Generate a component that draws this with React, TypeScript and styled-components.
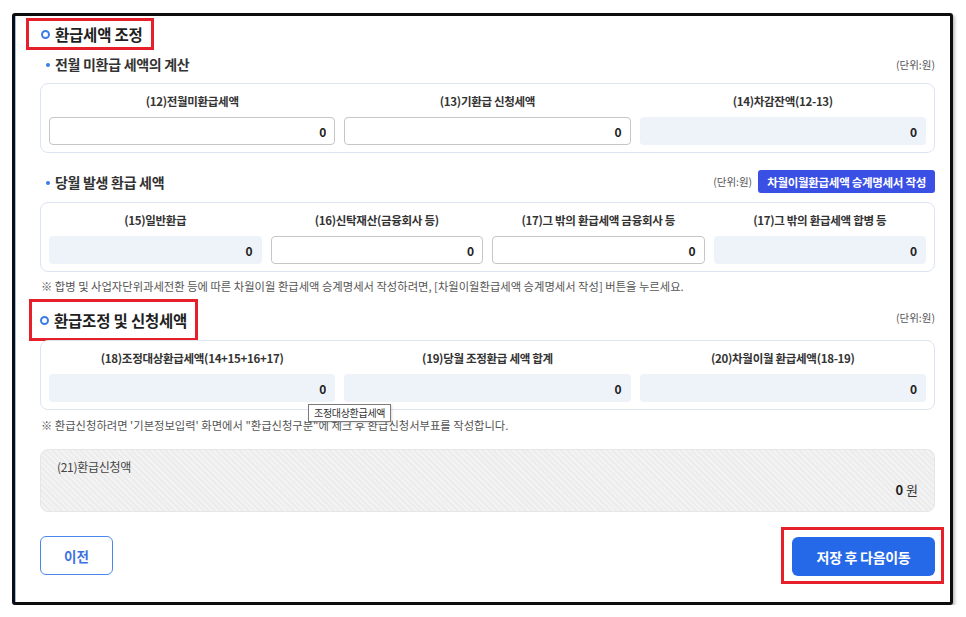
import styled, { createGlobalStyle } from 'styled-components'

type Field = { label: string; value: string; editable?: boolean }

const prevMonthFields: Field[] = [
  { label: '(12)전월미환급세액', value: '0', editable: true },
  { label: '(13)기환급 신청세액', value: '0', editable: true },
  { label: '(14)차감잔액(12-13)', value: '0' },
]

const currentMonthFields: Field[] = [
  { label: '(15)일반환급', value: '0' },
  { label: '(16)신탁재산(금융회사 등)', value: '0', editable: true },
  { label: '(17)그 밖의 환급세액 금융회사 등', value: '0', editable: true },
  { label: '(17)그 밖의 환급세액 합병 등', value: '0' },
]

const adjustFields: Field[] = [
  { label: '(18)조정대상환급세액(14+15+16+17)', value: '0' },
  { label: '(19)당월 조정환급 세액 합계', value: '0' },
  { label: '(20)차월이월 환급세액(18-19)', value: '0' },
]

function FieldGrid({ fields, top, children }: { fields: Field[]; top: number; children?: React.ReactNode }) {
  return (
    <Card $cols={fields.length} $top={top}>
      {fields.map(f => (
        <Cell key={f.label}>
          <Label>{f.label}</Label>
          {f.editable ? (
            <Amount $editable defaultValue={f.value} />
          ) : (
            <Amount readOnly value={f.value} />
          )}
        </Cell>
      ))}
      {children}
    </Card>
  )
}

export default function App() {
  return (
    <>
      <GlobalStyle />
      <Frame>
        <Highlight $h={32} $pad="0 8px 0 12px" $left={-14} $top={1}>
          <SectionTitle>
            <Ring />
            환급세액 조정
          </SectionTitle>
        </Highlight>

        <HeadRow $h={22} $top={3}>
          <SubTitle>
            <Dot />
            전월 미환급 세액의 계산
          </SubTitle>
          <Unit>(단위:원)</Unit>
        </HeadRow>
        <FieldGrid fields={prevMonthFields} top={8} />

        <HeadRow $h={23} $top={17}>
          <SubTitle>
            <Dot />
            당월 발생 환급 세액
          </SubTitle>
          <Actions>
            <Unit>(단위:원)</Unit>
            <SmallButton>차월이월환급세액 승계명세서 작성</SmallButton>
          </Actions>
        </HeadRow>
        <FieldGrid fields={currentMonthFields} top={9} />

        <Note $top={6}>
          ※ 합병 및 사업자단위과세전환 등에 따른 차월이월 환급세액 승계명세서 작성하려면, [차월이월환급세액 승계명세서 작성] 버튼을 누르세요.
        </Note>

        <HeadRow $h={42} $top={5}>
          <Highlight $h={42} $pad="0 8px" $left={-11} $top={0}>
            <SectionTitle>
              <Ring />
              환급조정 및 신청세액
            </SectionTitle>
          </Highlight>
          <Unit $lift={6}>(단위:원)</Unit>
        </HeadRow>
        <FieldGrid fields={adjustFields} top={-1}>
          <Tooltip>조정대상환급세액</Tooltip>
        </FieldGrid>

        <Note $top={7}>
          ※ 환급신청하려면 '기본정보입력' 화면에서 "환급신청구분"에 체크 후 환급신청서부표를 작성합니다.
        </Note>

        <RequestBox>
          <RequestLabel>(21)환급신청액</RequestLabel>
          <RequestTotal>
            <b>0</b> 원
          </RequestTotal>
        </RequestBox>

        <Footer>
          <PrevButton>이전</PrevButton>
          <Highlight $h={57} $pad="7px 6px 5px 8px" $left={0} $top={0} $right={-9}>
            <NextButton>저장 후 다음이동</NextButton>
          </Highlight>
        </Footer>
      </Frame>
    </>
  )
}

const GlobalStyle = createGlobalStyle`
  * { box-sizing: border-box; }
  body {
    margin: 0;
    background: #fff;
    color: #222;
    font-family: 'Noto Sans CJK KR', 'Noto Sans', sans-serif;
  }
`

const Frame = styled.div`
  width: 941px;
  height: 592px;
  margin: 13px 0 0 12px;
  padding: 1px 15px 0 25px;
  display: flex;
  flex-direction: column;
  border: 3px solid #0d0d0d;
  border-radius: 3px;
  background: #fff;
  box-shadow: inset 1px 0 0 #9db9ea, 2px 2px 3px rgba(0, 0, 0, 0.25);
`

const Highlight = styled.div<{ $h: number; $pad: string; $left: number; $top: number; $right?: number }>`
  align-self: flex-start;
  display: inline-flex;
  align-items: center;
  height: ${p => p.$h}px;
  padding: ${p => p.$pad};
  margin: ${p => p.$top}px ${p => p.$right ?? 0}px 0 ${p => p.$left}px;
  border: 3px solid #e5202a;
`

const SectionTitle = styled.h2`
  margin: 0;
  display: flex;
  align-items: center;
  gap: 5px;
  font-size: 15.5px;
  font-weight: 700;
  letter-spacing: -0.2px;
  color: #1f1f1f;
  white-space: nowrap;
`

const Ring = styled.span`
  width: 9px;
  height: 9px;
  border: 2px solid #3b7de8;
  border-radius: 50%;
`

const HeadRow = styled.div<{ $h: number; $top: number }>`
  display: flex;
  justify-content: space-between;
  align-items: center;
  height: ${p => p.$h}px;
  margin-top: ${p => p.$top}px;
`

const SubTitle = styled.h3`
  margin: 0;
  padding-left: 6px;
  display: flex;
  align-items: center;
  gap: 5px;
  font-size: 14px;
  font-weight: 600;
  letter-spacing: -0.3px;
  color: #333;
`

const Dot = styled.span`
  width: 4px;
  height: 4px;
  margin-top: 2px;
  border-radius: 50%;
  background: #3b7de8;
`

const Unit = styled.span<{ $lift?: number }>`
  margin-bottom: ${p => p.$lift ?? 0}px;
  font-size: 10.5px;
  color: #555;
`

const Actions = styled.div`
  display: flex;
  align-items: center;
  gap: 6px;
`

const SmallButton = styled.button`
  height: 23px;
  padding: 0 9px;
  border: none;
  border-radius: 3px;
  background: #3a4fe3;
  color: #fff;
  font-family: inherit;
  font-size: 11.5px;
  font-weight: 700;
  letter-spacing: -0.3px;
`

const Card = styled.div<{ $cols: number; $top: number }>`
  position: relative;
  display: grid;
  grid-template-columns: repeat(${p => p.$cols}, 1fr);
  column-gap: 9px;
  margin-top: ${p => p.$top}px;
  padding: 8px 8px 7px;
  border: 1px solid #dce4f2;
  border-radius: 8px;
  background: #fff;
`

const Cell = styled.div`
  display: flex;
  flex-direction: column;
  gap: 7px;
  min-width: 0;
`

const Label = styled.div`
  height: 18px;
  line-height: 18px;
  text-align: center;
  white-space: nowrap;
  font-size: 11.5px;
  font-weight: 600;
  letter-spacing: -0.3px;
  color: #333;
`

const Amount = styled.input<{ $editable?: boolean }>`
  width: 100%;
  height: 28px;
  padding: 0 8px;
  text-align: right;
  font-family: inherit;
  font-size: 12px;
  font-weight: 700;
  color: #222;
  border: 1px solid ${p => (p.$editable ? '#c6c6c6' : 'transparent')};
  border-radius: 4px;
  background: ${p => (p.$editable ? '#fff' : '#eef2f9')};
  outline: none;
`

const Tooltip = styled.div`
  position: absolute;
  left: 267px;
  top: 63px;
  height: 18px;
  padding: 0 5px;
  line-height: 16px;
  border: 1px solid #7a7a7a;
  background: #fff;
  font-size: 10px;
  letter-spacing: -0.3px;
  color: #333;
  white-space: nowrap;
  box-shadow: 1px 1px 2px rgba(0, 0, 0, 0.15);
`

const Note = styled.p<{ $top: number }>`
  margin: ${p => p.$top}px 0 0 1px;
  line-height: 16px;
  font-size: 11.3px;
  color: #555;
  white-space: nowrap;
`

const RequestBox = styled.div`
  display: flex;
  flex-direction: column;
  height: 63px;
  margin-top: 16px;
  padding: 9px 16px 0;
  border: 1px solid #e6e6e6;
  border-radius: 8px;
  background: repeating-linear-gradient(45deg, #f3f3f3 0 2px, #ececec 2px 4px);
`

const RequestLabel = styled.div`
  line-height: 16px;
  font-size: 12px;
  letter-spacing: -0.3px;
  color: #444;
`

const RequestTotal = styled.div`
  margin-top: 6px;
  line-height: 18px;
  text-align: right;
  font-size: 13px;
  color: #333;

  b {
    color: #222;
  }
`

const Footer = styled.div`
  display: flex;
  justify-content: space-between;
  align-items: center;
  margin-top: 15px;
`

const PrevButton = styled.button`
  width: 73px;
  height: 39px;
  border: 1px solid #4c87ee;
  border-radius: 6px;
  background: #fff;
  color: #3a72e2;
  font-family: inherit;
  font-size: 13.5px;
  font-weight: 700;
`

const NextButton = styled.button`
  width: 143px;
  height: 39px;
  border: none;
  border-radius: 6px;
  background: #2569e9;
  color: #fff;
  font-family: inherit;
  font-size: 14px;
  font-weight: 700;
  letter-spacing: -0.3px;
`
